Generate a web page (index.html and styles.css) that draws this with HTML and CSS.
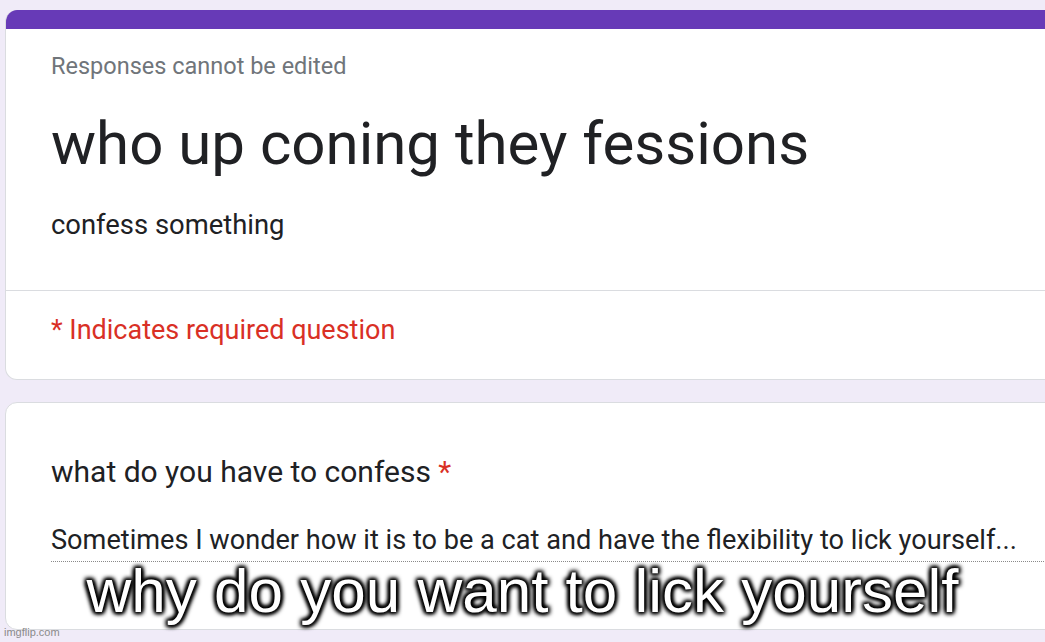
FILE: index.html
```html
<!DOCTYPE html>
<html>
<head>
<meta charset="utf-8">
<link rel="stylesheet" href="styles.css">
</head>
<body>
<main class="page">
  <section class="card header-card">
    <div class="band"></div>
    <div class="header-body">
      <div class="note">Responses cannot be edited</div>
      <h1 class="title">who up coning they fessions</h1>
      <div class="desc">confess something</div>
    </div>
    <div class="required">* Indicates required question</div>
  </section>
  <section class="card question-card">
    <div class="question">what do you have to confess <span class="star">*</span></div>
    <div class="answer">Sometimes I wonder how it is to be a cat and have the flexibility to lick yourself...</div>
  </section>
</main>
<div class="caption">why do you want to lick yourself</div>
<div class="watermark">imgflip.com</div>
</body>
</html>
```
FILE: styles.css
```css
html, body {
  margin: 0;
  padding: 0;
  width: 1045px;
  height: 642px;
  overflow: hidden;
  background: #f0ebf8;
  font-family: Roboto, "Liberation Sans", sans-serif;
  color: #202124;
  position: relative;
}
.page {
  display: flex;
  flex-direction: column;
  gap: 22px;
  padding: 10px 0 0 5px;
}
.card {
  width: 1070px;
  background: #fff;
  border: 1px solid #dadce0;
  border-radius: 12px;
  box-sizing: border-box;
  overflow: hidden;
  flex: none;
}
.header-card {
  height: 370px;
  border-top: none;
}
.band {
  height: 19px;
  background: #673ab7;
}
.header-body {
  padding: 23px 0 0 45px;
  height: 262px;
  box-sizing: border-box;
  border-bottom: 1px solid #dadce0;
}
.note {
  font-size: 23.5px;
  color: #70757a;
  line-height: 28px;
}
.title {
  margin: 28px 0 0 0;
  font-weight: 400;
  font-size: 60px;
  line-height: 72px;
}
.desc {
  margin-top: 28px;
  font-size: 27.4px;
  line-height: 34px;
}
.required {
  padding: 22px 0 0 45px;
  font-size: 27px;
  line-height: 34px;
  color: #d93025;
}
.question-card {
  height: 228px;
  padding: 51px 0 0 45px;
}
.question {
  font-size: 30px;
  line-height: 36px;
}
.star {
  color: #d93025;
}
.answer {
  margin-top: 34px;
  font-size: 27.15px;
  line-height: 32px;
  padding-bottom: 5px;
  border-bottom: 1px dotted #8a8a8a;
}
.caption {
  position: absolute;
  left: 0;
  right: 0;
  top: 556px;
  text-align: center;
  font-family: "Liberation Sans", Arial, sans-serif;
  font-size: 62px;
  line-height: 70px;
  color: #fff;
  text-shadow: 0 0 4px #000, 0 0 3px #000, 2px 2px 4px #000, -2px -2px 4px #000, 2px -2px 4px #000, -2px 2px 4px #000;
}
.watermark {
  position: absolute;
  left: 4px;
  top: 626px;
  font-family: "Liberation Sans", Arial, sans-serif;
  font-size: 11px;
  line-height: 13px;
  color: #8a8a8a;
}
```
